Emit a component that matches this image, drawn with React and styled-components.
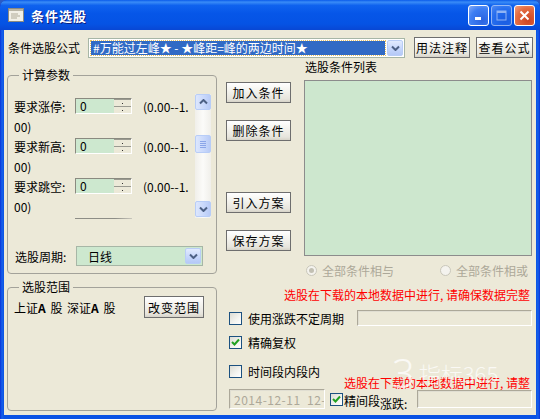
import React from "react";
import styled, { createGlobalStyle } from "styled-components";

const GlobalStyle = createGlobalStyle`
  html, body {
    margin: 0;
    padding: 0;
    background: #2b5bc4;
  }
  body {
    font-family: "Noto Sans CJK SC", "Noto Sans", sans-serif;
    font-size: 12px;
    color: #000;
  }
`;

const Window = styled.div`
  width: 540px;
  height: 419px;
  box-sizing: border-box;
  background: linear-gradient(to right, #0831d9 0, #1660ea 2px, #0a52e4 4px, #0a52e4 536px, #1660ea 538px, #0831d9 540px);
  border-radius: 7px 7px 0 0;
  display: flex;
  flex-direction: column;
  overflow: hidden;
  position: relative;
`;

const TitleBar = styled.div`
  height: 30px;
  flex: none;
  display: flex;
  align-items: center;
  padding: 0 5px 0 8px;
  background: linear-gradient(
    to bottom,
    #0a5bea 0%,
    #3a8cf7 7%,
    #0f62ee 18%,
    #0656e8 45%,
    #0553e4 80%,
    #0847d4 100%
  );
  border-radius: 7px 7px 0 0;
`;

const TitleText = styled.span`
  margin-left: 7px;
  color: #fff;
  font-weight: bold;
  font-size: 13px;
  letter-spacing: 1px;
  text-shadow: 1px 1px 0 #0a1e80;
  flex: 1;
`;

const CaptionButton = styled.div`
  width: 21px;
  height: 21px;
  box-sizing: border-box;
  border: 1px solid #fff;
  border-radius: 3px;
  margin-left: 2px;
  display: flex;
  align-items: center;
  justify-content: center;
  background: ${(p) =>
    p.kind === "close"
      ? "radial-gradient(circle at 70% 75%, #cc4422, #e36a40 60%, #f0a080)"
      : "radial-gradient(circle at 70% 75%, #2a63e0, #3d7ef3 60%, #86acf7)"};
  opacity: ${(p) => (p.disabled ? 0.55 : 1)};
`;

const Client = styled.div`
  flex: 1;
  margin: 0 4px 4px 4px;
  background: #ece9d8;
  position: relative;
  display: flex;
  flex-direction: column;
`;

const FormulaRow = styled.div`
  display: flex;
  align-items: center;
  margin-top: 7px;
  padding-left: 4px;
  height: 21px;
`;

const FieldLabel = styled.span`
  width: ${(p) => p.w || 61}px;
  flex: none;
  white-space: nowrap;
`;

const Combo = styled.div`
  width: ${(p) => p.w}px;
  height: 20px;
  box-sizing: border-box;
  border: 1px solid #a7b6a6;
  background: ${(p) => (p.green ? "#cde8cf" : "#fff")};
  display: flex;
  align-items: stretch;
  padding: 1px;
  flex: none;
`;

const ComboValue = styled.div`
  flex: 1;
  display: flex;
  align-items: center;
  padding-left: ${(p) => (p.selected ? 2 : 10)}px;
  margin: ${(p) => (p.selected ? "1px 2px 1px 1px" : "0")};
  background: ${(p) => (p.selected ? "#316ac5" : "transparent")};
  color: ${(p) => (p.selected ? "#fff" : "#000")};
  outline: ${(p) => (p.selected ? "1px dotted #e8c060" : "none")};
  white-space: nowrap;
  overflow: hidden;
`;

const DropButton = styled.div`
  width: 16px;
  flex: none;
  box-sizing: border-box;
  border: 1px solid #b9cdf6;
  border-radius: 2px;
  background: linear-gradient(to bottom, #e2ebfe, #c4d5fb 60%, #b5c9f7);
  display: flex;
  align-items: center;
  justify-content: center;
`;

const Button = styled.div`
  width: ${(p) => p.w || 65}px;
  height: ${(p) => p.h || 21}px;
  box-sizing: border-box;
  margin-top: ${(p) => p.mt || 0}px;
  margin-left: ${(p) => p.ml || 0}px;
  border: 1px solid #6e6e6e;
  background: linear-gradient(to bottom, #ffffff 0%, #f4f3ee 40%, #e6e4dc 85%, #d6d3c8 100%);
  display: flex;
  align-items: center;
  justify-content: center;
  letter-spacing: 1px;
  flex: none;
  white-space: nowrap;
`;

const Body = styled.div`
  display: flex;
  padding-left: 3px;
  gap: 9px;
`;

const LeftCol = styled.div`
  width: 210px;
  flex: none;
  display: flex;
  flex-direction: column;
`;

const Group = styled.fieldset`
  margin: ${(p) => p.mt}px 0 0 0;
  padding: 0 0 0 6px;
  height: ${(p) => p.h}px;
  box-sizing: border-box;
  border: 1px solid #a3a29a;
  border-radius: 4px;
  min-width: 0;
`;

const GroupTitle = styled.legend`
  margin-left: 5px;
  padding: 0 3px;
  line-height: 14px;
  font-size: 12px;
`;

const ParamArea = styled.div`
  display: flex;
  margin-top: 12px;
`;

const ParamList = styled.div`
  width: 181px;
  padding-top: 2px;
  display: flex;
  flex-direction: column;
`;

const Line = styled.div`
  height: 20px;
  display: flex;
  align-items: center;
  white-space: nowrap;
`;

const SpinBox = styled.div`
  width: 57px;
  height: 16px;
  box-sizing: border-box;
  display: flex;
  border: 1px solid #8a8a80;
  border-right-color: #fff;
  border-bottom-color: #fff;
  flex: none;
`;

const SpinValue = styled.div`
  flex: 1;
  background: #cde8cf;
  padding-left: 4px;
  line-height: 14px;
  font-size: 12px;
`;

const Spinner = styled.div`
  width: 17px;
  display: flex;
  flex-direction: column;
  background: #ece9d8;
`;

const SpinHalf = styled.div`
  flex: 1;
  border-top: 1px solid #9a9a90;
  display: flex;
  align-items: center;
  justify-content: center;
  &::after {
    content: "";
    width: 1px;
    height: 1px;
    background: #333;
  }
`;

const RangeText = styled.span`
  margin-left: 11px;
  font-size: 12px;
`;

const ScrollBar = styled.div`
  width: 16px;
  height: 124px;
  flex: none;
  display: flex;
  flex-direction: column;
  background: linear-gradient(to right, #f0efea, #fbfbf9 50%, #f0efea);
`;

const ScrollButton = styled.div`
  height: ${(p) => p.h || 16}px;
  margin-top: ${(p) => p.mt || 0}px;
  box-sizing: border-box;
  border: 1px solid #b8cdf7;
  border-radius: 2px;
  background: linear-gradient(to right, #dde7fd, #c7d7fb 60%, #b8cbf6);
  display: flex;
  align-items: center;
  justify-content: center;
  flex: none;
`;

const Divider = styled.div`
  margin: 2px 0 0 61px;
  width: 57px;
  height: 1px;
  background: linear-gradient(to right, #8d8d86 70%, #c8c6bc);
`;

const PeriodRow = styled.div`
  display: flex;
  align-items: center;
  margin-top: 27px;
  padding-left: 1px;
`;

const RangeRow = styled.div`
  display: flex;
  align-items: center;
  margin-top: 2px;
  padding-right: 12px;
`;

const MarketText = styled.span`
  flex: 1;
  white-space: nowrap;
  word-spacing: 2px;
`;

const RightCol = styled.div`
  width: 307px;
  flex: none;
  display: flex;
  flex-direction: column;
  position: relative;
`;

const TopRight = styled.div`
  display: flex;
  gap: 13px;
`;

const ButtonCol = styled.div`
  width: 65px;
  padding-top: 24px;
  display: flex;
  flex-direction: column;
`;

const ListCol = styled.div`
  width: 228px;
  display: flex;
  flex-direction: column;
`;

const ListLabel = styled.div`
  height: 22px;
  padding-left: 1px;
  line-height: 18px;
`;

const ListBox = styled.div`
  height: 176px;
  box-sizing: border-box;
  border: 1px solid #8c8c8c;
  background: #cde7ce;
`;

const RadioRow = styled.div`
  display: flex;
  margin-top: 7px;
  padding-left: 80px;
  height: 14px;
  align-items: center;
  color: #aca899;
`;

const RadioItem = styled.div`
  width: ${(p) => p.w || "auto"}px;
  display: flex;
  align-items: center;
  gap: 5px;
  white-space: nowrap;
`;

const RadioDot = styled.span`
  width: 11px;
  height: 11px;
  box-sizing: border-box;
  border-radius: 50%;
  border: 1px solid #c9c7ba;
  background: #f4f3ee;
  display: flex;
  align-items: center;
  justify-content: center;
  &::after {
    content: "";
    width: 5px;
    height: 5px;
    border-radius: 50%;
    background: ${(p) => (p.checked ? "#c2c0b3" : "transparent")};
  }
`;

const Notice = styled.div`
  color: #ff0000;
  text-align: right;
  padding-right: 3px;
  margin-top: 11px;
  line-height: 14px;
  white-space: nowrap;
`;

const CheckRow = styled.div`
  display: flex;
  align-items: center;
  height: 16px;
  margin-top: ${(p) => p.mt}px;
  padding-left: 3px;
  white-space: nowrap;
`;

const CheckBox = styled.span`
  width: 13px;
  height: 13px;
  box-sizing: border-box;
  border: 1px solid #1c5180;
  background: linear-gradient(135deg, #dcdcd4, #f4f4f0 60%, #ffffff);
  margin-left: ${(p) => p.ml || 0}px;
  margin-right: ${(p) => (p.mr === undefined ? 6 : p.mr)}px;
  display: flex;
  align-items: center;
  justify-content: center;
  flex: none;
`;

const SunkenField = styled.div`
  width: ${(p) => p.w}px;
  height: ${(p) => p.h || 16}px;
  margin-left: ${(p) => p.ml || 0}px;
  box-sizing: border-box;
  border: 1px solid #aca899;
  border-right-color: #fff;
  border-bottom-color: #fff;
  box-shadow: inset 1px 1px 0 #e0ded2;
  color: #aca899;
  display: flex;
  align-items: center;
  padding-left: 4px;
  overflow: hidden;
  white-space: nowrap;
  flex: none;
  letter-spacing: 0.5px;
`;

const DateRow = styled.div`
  display: flex;
  align-items: center;
  height: 20px;
  margin-top: 10px;
  padding-left: 3px;
  white-space: nowrap;
`;

const Shifted = styled.span`
  position: relative;
  top: ${(p) => p.dy || 0}px;
  margin-left: ${(p) => p.ml || 0}px;
`;

const Ghost = styled.div`
  position: absolute;
  left: ${(p) => p.x}px;
  top: ${(p) => p.y}px;
  color: ${(p) => p.color || "#ff0000"};
  white-space: nowrap;
  font-size: ${(p) => p.size || 12}px;
  pointer-events: none;
`;

const Watermark = styled.div`
  position: absolute;
  left: 388px;
  top: 315px;
  display: flex;
  align-items: center;
  gap: 4px;
  color: rgba(255, 255, 255, 0.75);
  font-family: "Noto Sans", sans-serif;
  pointer-events: none;
`;

const Chevron = ({ dir = "down", color = "#4d6185" }) => (
  <svg width="9" height="6" viewBox="0 0 9 6">
    <path
      d={dir === "down" ? "M1 1.5 L4.5 5 L8 1.5" : "M1 4.5 L4.5 1 L8 4.5"}
      fill="none"
      stroke={color}
      strokeWidth="2"
    />
  </svg>
);

const Check = () => (
  <svg width="9" height="9" viewBox="0 0 9 9">
    <path d="M1 4 L3.5 6.5 L8 1.5" fill="none" stroke="#21a121" strokeWidth="2" />
  </svg>
);

const params = ["要求涨停:", "要求新高:", "要求跳空:"];

export default function App() {
  return (
    <>
      <GlobalStyle />
      <Window>
        <TitleBar>
          <svg width="16" height="14" viewBox="0 0 16 14">
            <rect x="0.5" y="0.5" width="15" height="13" fill="#f2f0e6" stroke="#8c8a80" />
            <rect x="1" y="1" width="14" height="2" fill="#b8b4a4" />
            <path d="M3 6h7M3 8h9M3 10h6" stroke="#b0ab98" strokeWidth="1" />
          </svg>
          <TitleText>条件选股</TitleText>
          <CaptionButton>
            <svg width="11" height="11" viewBox="0 0 11 11">
              <rect x="2" y="7" width="6" height="3" fill="#fff" />
            </svg>
          </CaptionButton>
          <CaptionButton disabled>
            <svg width="11" height="11" viewBox="0 0 11 11">
              <rect x="1" y="1" width="9" height="9" fill="none" stroke="#fff" />
              <rect x="1" y="1" width="9" height="2" fill="#fff" />
            </svg>
          </CaptionButton>
          <CaptionButton kind="close">
            <svg width="11" height="11" viewBox="0 0 11 11">
              <path d="M1.5 1.5 L9.5 9.5 M9.5 1.5 L1.5 9.5" stroke="#fff" strokeWidth="2" />
            </svg>
          </CaptionButton>
        </TitleBar>

        <Client>
          <FormulaRow>
            <FieldLabel w={80}>条件选股公式</FieldLabel>
            <Combo w={317}>
              <ComboValue selected>#万能过左峰★ - ★峰距=峰的两边时间★</ComboValue>
              <DropButton>
                <Chevron />
              </DropButton>
            </Combo>
            <Button w={56} ml={9}>用法注释</Button>
            <Button w={57} ml={6}>查看公式</Button>
          </FormulaRow>

          <Body>
            <LeftCol>
              <Group mt={10} h={206}>
                <GroupTitle>计算参数</GroupTitle>
                <ParamArea>
                  <ParamList>
                    {params.map((label) => (
                      <React.Fragment key={label}>
                        <Line>
                          <FieldLabel>{label}</FieldLabel>
                          <SpinBox>
                            <SpinValue>0</SpinValue>
                            <Spinner>
                              <SpinHalf />
                              <SpinHalf />
                            </Spinner>
                          </SpinBox>
                          <RangeText>(0.00--1.</RangeText>
                        </Line>
                        <Line>00)</Line>
                      </React.Fragment>
                    ))}
                    <Divider />
                  </ParamList>
                  <ScrollBar>
                    <ScrollButton>
                      <Chevron dir="up" />
                    </ScrollButton>
                    <ScrollButton mt={25} h={18}>
                      <svg width="8" height="8" viewBox="0 0 8 8">
                        <path d="M1 1.5h6M1 3.5h6M1 5.5h6M1 7.5h6" stroke="#8aa5e8" />
                      </svg>
                    </ScrollButton>
                    <ScrollButton mt={48}>
                      <Chevron />
                    </ScrollButton>
                  </ScrollBar>
                </ParamArea>
                <PeriodRow>
                  <FieldLabel>选股周期:</FieldLabel>
                  <Combo w={127} green>
                    <ComboValue>日线</ComboValue>
                    <DropButton>
                      <Chevron />
                    </DropButton>
                  </Combo>
                </PeriodRow>
              </Group>

              <Group mt={6} h={131}>
                <GroupTitle>选股范围</GroupTitle>
                <RangeRow>
                  <MarketText>上证<b>A</b> 股 深证<b>A</b> 股</MarketText>
                  <Button w={60} h={22}>改变范围</Button>
                </RangeRow>
              </Group>
            </LeftCol>

            <RightCol>
              <TopRight>
                <ButtonCol>
                  <Button>加入条件</Button>
                  <Button mt={17}>删除条件</Button>
                  <Button mt={51}>引入方案</Button>
                  <Button mt={17}>保存方案</Button>
                </ButtonCol>
                <ListCol>
                  <ListLabel>选股条件列表</ListLabel>
                  <ListBox />
                </ListCol>
              </TopRight>

              <RadioRow>
                <RadioItem w={134}>
                  <RadioDot checked />
                  全部条件相与
                </RadioItem>
                <RadioItem>
                  <RadioDot />
                  全部条件相或
                </RadioItem>
              </RadioRow>

              <Notice>选股在下载的本地数据中进行, 请确保数据完整</Notice>

              <CheckRow mt={8}>
                <CheckBox />
                使用涨跌不定周期
                <SunkenField w={175} ml={13} />
              </CheckRow>

              <CheckRow mt={8}>
                <CheckBox>
                  <Check />
                </CheckBox>
                精确复权
              </CheckRow>

              <CheckRow mt={13}>
                <CheckBox />
                时间段内段内
              </CheckRow>

              <DateRow>
                <SunkenField w={96} h={20}>2014-12-11&nbsp;&nbsp;12-12</SunkenField>
                <CheckBox ml={5} mr={1}>
                  <Check />
                </CheckBox>
                <Shifted dy={1}>精间段</Shifted>
                <Shifted dy={4}>涨跌:</Shifted>
                <SunkenField w={115} h={18} ml={10} />
              </DateRow>

              <Ghost x={118} y={316}>选股在下载的本地数据中进行, 请整</Ghost>
            </RightCol>
          </Body>

          <Watermark>
            <span style={{ fontSize: 40, fontWeight: 300 }}>3</span>
            <span style={{ fontSize: 22, fontFamily: "Noto Sans CJK SC", fontWeight: 300 }}>指标365</span>
          </Watermark>
        </Client>
      </Window>
    </>
  );
}
